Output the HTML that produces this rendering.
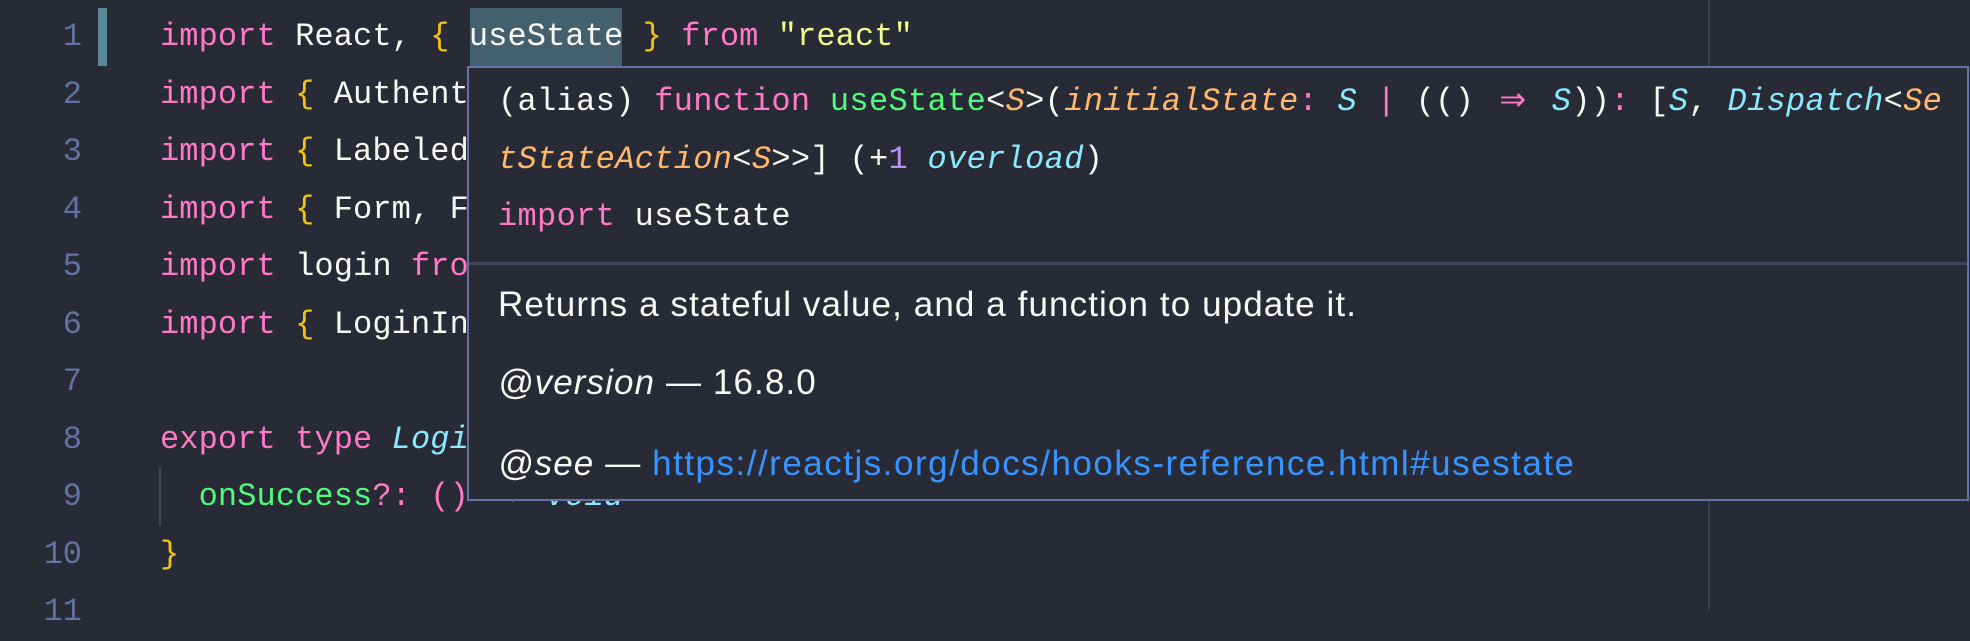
<!DOCTYPE html>
<html><head><meta charset="utf-8"><style>
html,body{margin:0;padding:0;background:#282a36;}
body{width:1970px;height:610px;position:relative;overflow:hidden;font-family:"Liberation Mono",monospace;font-size:32px;color:#f8f8f2;}
.ln{position:absolute;left:0;width:82px;text-align:right;color:#6272a4;line-height:58px;height:58px;}
.cl{position:absolute;left:160px;white-space:pre;line-height:58px;height:58px;letter-spacing:0.1px;}
.k{color:#ff79c6}.b{color:#f1c40f}.s{color:#f1fa8c}.g{color:#50fa7b}.c{color:#8be9fd}.o{color:#ffb86c}.p{color:#bd93f9}.i{font-style:italic}
.ar{display:inline-block;width:2ch;text-align:center;color:#ff79c6}
#tip{position:absolute;left:467px;top:66px;width:1498px;height:431px;border:2px solid #6272a4;background:#282a36;}
.tl{position:absolute;left:29px;white-space:pre;line-height:58px;letter-spacing:0.32px;}
#sep{position:absolute;left:0;right:0;top:194px;height:3px;background:#44475a;}
.doc{position:absolute;left:29px;font-family:"Liberation Sans",sans-serif;font-size:35px;letter-spacing:1.1px;line-height:40px;white-space:pre;color:#f8f8f2;}
a{color:#3794ff;text-decoration:none;letter-spacing:1.5px}
</style></head><body>
<div style="position:absolute;left:1708px;top:0;width:2px;height:610px;background:#3a3d4c"></div>
<div style="position:absolute;left:98px;top:8px;width:9px;height:58px;background:#5a8a9a"></div>
<div style="position:absolute;left:470px;top:8px;width:152px;height:58px;background:#44606e"></div>
<div style="position:absolute;left:159px;top:468px;width:2px;height:58px;background:#44475a"></div>

<div class="ln" style="top:8px">1</div>
<div class="ln" style="top:66px">2</div>
<div class="ln" style="top:123px">3</div>
<div class="ln" style="top:181px">4</div>
<div class="ln" style="top:238px">5</div>
<div class="ln" style="top:296px">6</div>
<div class="ln" style="top:353px">7</div>
<div class="ln" style="top:411px">8</div>
<div class="ln" style="top:468px">9</div>
<div class="ln" style="top:526px">10</div>
<div class="ln" style="top:583px">11</div>

<div class="cl" style="top:8px"><span class="k">import</span> React, <span class="b">{</span> useState <span class="b">}</span> <span class="k">from</span> <span class="s">"react"</span></div>
<div class="cl" style="top:66px"><span class="k">import</span> <span class="b">{</span> Authenticated <span class="b">}</span></div>
<div class="cl" style="top:123px"><span class="k">import</span> <span class="b">{</span> LabeledInput <span class="b">}</span></div>
<div class="cl" style="top:181px"><span class="k">import</span> <span class="b">{</span> Form, Field <span class="b">}</span></div>
<div class="cl" style="top:238px"><span class="k">import</span> login <span class="k">from</span></div>
<div class="cl" style="top:296px"><span class="k">import</span> <span class="b">{</span> LoginInput <span class="b">}</span></div>
<div class="cl" style="top:411px"><span class="k">export</span> <span class="k">type</span> <span class="c i">LoginProps</span></div>
<div class="cl" style="top:468px">  <span class="g">onSuccess</span><span class="k">?:</span> <span style="color:#ff79c6">()</span> <span class="ar">⇒</span> <span class="c i">void</span></div>
<div class="cl" style="top:526px"><span class="b">}</span></div>

<div id="tip">
<div class="tl" style="top:5px">(alias) <span class="k">function</span> <span class="g">useState</span>&lt;<span class="o i">S</span>&gt;(<span class="o i">initialState</span><span class="k">:</span> <span class="c i">S</span> <span class="k">|</span> (() <span class="ar">⇒</span> <span class="c i">S</span>))<span class="k">:</span> [<span class="c i">S</span>, <span class="c i">Dispatch</span>&lt;<span class="o i">Se</span></div>
<div class="tl" style="top:63px"><span class="o i">tStateAction</span>&lt;<span class="o i">S</span>&gt;&gt;] (+<span class="p">1</span> <span class="c i">overload</span>)</div>
<div class="tl" style="top:120px"><span class="k">import</span> useState</div>
<div id="sep"></div>
<div class="doc" style="top:217px">Returns a stateful value, and a function to update it.</div>
<div class="doc" style="top:295px"><i>@version</i> — 16.8.0</div>
<div class="doc" style="top:376px"><i>@see</i> — <a>https://reactjs.org/docs/hooks-reference.html#usestate</a></div>
</div>
</body></html>
